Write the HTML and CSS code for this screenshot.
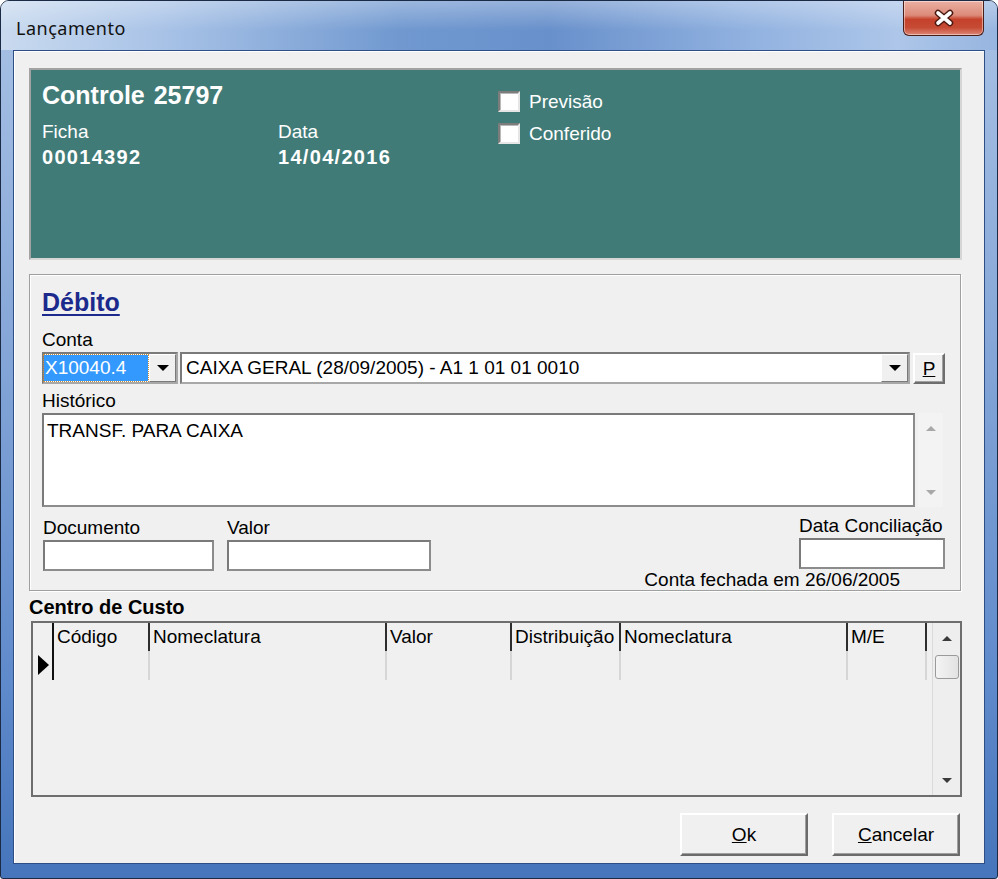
FILE: index.html
```html
<!DOCTYPE html>
<html lang="pt">
<head>
<meta charset="utf-8">
<title>Lançamento</title>
<link rel="stylesheet" href="styles.css">
</head>
<body>
<div class="window">
  <div class="titlebar">
    <span class="title">Lançamento</span>
    <div class="close-btn">
      <svg width="22" height="18" viewBox="0 0 22 18">
        <path d="M5 4 L17 14 M17 4 L5 14" stroke="#4a1810" stroke-width="6.5" stroke-linecap="round"/>
        <path d="M5 4 L17 14 M17 4 L5 14" stroke="#ffffff" stroke-width="3.6" stroke-linecap="round"/>
      </svg>
    </div>
  </div>
  <div class="client">
    <section class="info-panel">
      <div class="info-main">
        <div class="controle">Controle 25797</div>
        <div class="info-fields">
          <div class="info-field ficha"><div class="lbl">Ficha</div><div class="val">00014392</div></div>
          <div class="info-field"><div class="lbl">Data</div><div class="val">14/04/2016</div></div>
        </div>
      </div>
      <div class="checks">
        <div class="check"><span class="chk"></span><span>Previsão</span></div>
        <div class="check"><span class="chk"></span><span>Conferido</span></div>
      </div>
    </section>

    <section class="group">
      <div class="group-title">Débito</div>
      <div class="lbl lbl-conta">Conta</div>
      <div class="combo-row">
        <div class="combo combo-code"><span class="sel">X10040.4</span><span class="dd"></span></div>
        <div class="combo combo-name"><span class="combo-text">CAIXA GERAL (28/09/2005) - A1 1 01 01 0010</span><span class="dd"></span></div>
        <button class="btn-p"><u>P</u></button>
      </div>
      <div class="lbl lbl-hist">Histórico</div>
      <div class="hist-row">
        <div class="textarea">TRANSF. PARA CAIXA</div>
        <div class="vscroll-plain"><span class="arr up dim"></span><span class="arr down dim"></span></div>
      </div>
      <div class="doc-row">
        <div class="field f-doc"><div class="lbl">Documento</div><div class="input"></div></div>
        <div class="field f-valor"><div class="lbl">Valor</div><div class="input"></div></div>
        <div class="field f-conc"><div class="lbl">Data Conciliação</div><div class="input"></div></div>
      </div>
      <div class="fechada">Conta fechada em 26/06/2005</div>
    </section>

    <div class="cc-title">Centro de Custo</div>
    <div class="grid">
      <div class="grid-body">
        <div class="grid-row head">
          <div class="gc ind"></div>
          <div class="gc c1">Código</div>
          <div class="gc c2">Nomeclatura</div>
          <div class="gc c3">Valor</div>
          <div class="gc c4">Distribuição</div>
          <div class="gc c5">Nomeclatura</div>
          <div class="gc c6">M/E</div>
        </div>
        <div class="grid-row data">
          <div class="gc ind"><span class="pointer"></span></div>
          <div class="gc c1"></div>
          <div class="gc c2"></div>
          <div class="gc c3"></div>
          <div class="gc c4"></div>
          <div class="gc c5"></div>
          <div class="gc c6"></div>
        </div>
      </div>
      <div class="grid-scroll">
        <span class="arr up"></span>
        <span class="thumb"></span>
        <span class="arr down"></span>
      </div>
    </div>

    <div class="buttons">
      <button class="btn"><u>O</u>k</button>
      <button class="btn"><u>C</u>ancelar</button>
    </div>
  </div>
</div>
</body>
</html>
```

FILE: styles.css
```css
* { box-sizing: border-box; }
html, body { margin: 0; padding: 0; }
body {
  width: 998px;
  height: 879px;
  overflow: hidden;
  background: #ffffff;
  font-family: "Liberation Sans", Arial, sans-serif;
  font-size: 19px;
  color: #000;
}

.window {
  width: 998px;
  height: 879px;
  display: flex;
  flex-direction: column;
  border: 1px solid #1c2b45;
  border-radius: 9px 9px 3px 3px;
  overflow: hidden;
  padding: 0 12px 14px;
  background: linear-gradient(to bottom, #a9c2e5 0, #8aaad9 300px, #5f8acb 680px, #4675bb 100%);
}

.titlebar {
  height: 49px;
  flex: none;
  margin: 0 -12px;
  padding: 0 13px 0 15px;
  display: flex;
  justify-content: space-between;
  align-items: flex-start;
  background:
    linear-gradient(to bottom, rgba(255,255,255,0.3), rgba(255,255,255,0) 60%),
    linear-gradient(to right, #c9daef 0%, #a9c3e7 16%, #7199d0 40%, #6890cb 55%, #8fb0df 74%, #adc6e9 90%, #97b5e0 100%);
}
.title {
  margin-top: 16px;
  font-family: "Noto Sans", "Open Sans", sans-serif;
  font-size: 18px;
  line-height: 22px;
  letter-spacing: 0.5px;
  color: #111;
}
.close-btn {
  width: 81px;
  height: 35px;
  border: 1px solid #4a1d16;
  border-top: none;
  border-radius: 0 0 6px 6px;
  background: linear-gradient(to bottom, #eab0a3 0%, #dc8a78 42%, #c5412b 54%, #c64b34 78%, #dc8676 100%);
  box-shadow: inset 0 0 0 1px rgba(255,255,255,0.45);
  display: flex;
  align-items: center;
  justify-content: center;
}

.client {
  flex: 1;
  display: flex;
  flex-direction: column;
  background: #f0f0f0;
  border: 1px solid #2d4f86;
  box-shadow: inset 1px 1px 0 #ffffff;
  padding: 17px 22px 0 15px;
}

/* Teal info panel */
.info-panel {
  height: 192px;
  flex: none;
  display: flex;
  padding: 11px;
  background: #417b78;
  border: 2px solid;
  border-color: #a3a3a3 #d6d6d6 #d6d6d6 #a3a3a3;
  color: #ffffff;
}
.info-main { width: 456px; }
.controle {
  font-size: 25px;
  font-weight: bold;
  line-height: 28px;
  word-spacing: 2px;
}
.info-fields { display: flex; margin-top: 12px; }
.ficha { width: 236px; }
.lbl { line-height: 22px; }
.val {
  margin-top: 3px;
  font-size: 20px;
  font-weight: bold;
  line-height: 22px;
  letter-spacing: 1.3px;
}
.checks { margin-top: 10px; }
.check {
  display: flex;
  align-items: center;
  height: 21px;
  margin-bottom: 11px;
}
.chk {
  width: 22px;
  height: 21px;
  margin-right: 9px;
  background: #ffffff;
  border: 2px solid;
  border-color: #7c7c7c #e6e6e6 #e6e6e6 #7c7c7c;
  box-shadow: inset 1px 1px 0 #b9b9b9;
}

/* Débito group */
.group {
  height: 317px;
  flex: none;
  width: 932px;
  margin-top: 14px;
  padding: 13px 15px 0 12px;
  border: 1px solid #a0a0a0;
  box-shadow: inset 1px 1px 0 #ffffff, 1px 1px 0 #ffffff;
}
.group-title {
  font-size: 25px;
  font-weight: bold;
  line-height: 28px;
  color: #1b2a8c;
  text-decoration: underline;
  text-decoration-thickness: 2px;
  text-underline-offset: 3px;
}
.lbl-conta { margin-top: 13px; }
.combo-row {
  display: flex;
  height: 32px;
  margin-top: 1px;
}
.combo {
  height: 32px;
  display: flex;
  align-items: center;
  background: #ffffff;
  border: 2px solid;
  border-color: #7a7a7a #a8a8a8 #a8a8a8 #7a7a7a;
}
.combo-code { width: 136px; }
.combo-name { width: 730px; margin-left: 2px; }
.sel {
  width: 104px;
  height: 26px;
  line-height: 26px;
  padding-left: 1px;
  background: #3399ff;
  color: #ffffff;
  outline: 1px dotted #c98a3a;
}
.combo-text { padding-left: 4px; white-space: nowrap; }
.dd {
  width: 27px;
  height: 28px;
  margin-left: auto;
  display: flex;
  align-items: center;
  justify-content: center;
  background: #f0f0f0;
  border: 1px solid;
  border-color: #ffffff #7a7a7a #7a7a7a #ffffff;
}
.dd::after {
  content: "";
  border-left: 6px solid transparent;
  border-right: 6px solid transparent;
  border-top: 6px solid #000;
}
.btn-p {
  width: 32px;
  height: 31px;
  margin: 1px 0 0 3px;
  padding: 0;
  font: inherit;
  color: #000;
  background: #f0f0f0;
  border: 2px solid;
  border-color: #ffffff #6e6e6e #6e6e6e #ffffff;
  box-shadow: inset -1px -1px 0 #a0a0a0;
}
.lbl-hist { margin-top: 6px; }
.hist-row {
  display: flex;
  height: 94px;
  margin-top: 1px;
}
.textarea {
  width: 873px;
  height: 94px;
  padding: 5px 3px;
  line-height: 22px;
  background: #ffffff;
  border: 2px solid;
  border-color: #7a7a7a #8c8c8c #8c8c8c #7a7a7a;
}
.vscroll-plain {
  position: relative;
  width: 25px;
  margin-left: 3px;
  background: #f3f3f3;
}
.arr {
  position: absolute;
  left: 50%;
  margin-left: -5px;
  width: 0;
  height: 0;
  border-left: 5px solid transparent;
  border-right: 5px solid transparent;
}
.arr.up { top: 13px; border-bottom: 5px solid #3a3a3a; }
.arr.down { bottom: 12px; border-top: 5px solid #3a3a3a; }
.arr.up.dim { border-bottom-color: #a8a8a8; }
.arr.down.dim { border-top-color: #a8a8a8; }

.doc-row {
  display: flex;
  margin-top: 10px;
}
.input {
  height: 31px;
  margin-top: 1px;
  background: #ffffff;
  border: 2px solid;
  border-color: #7a7a7a #8c8c8c #8c8c8c #7a7a7a;
}
.f-doc { width: 171px; margin-left: 1px; }
.f-valor { width: 204px; margin-left: 13px; }
.f-conc { width: 146px; margin-left: auto; margin-top: -2px; }
.fechada {
  margin-top: -1px;
  padding-right: 45px;
  text-align: right;
  line-height: 20px;
}

/* Centro de Custo */
.cc-title {
  margin-top: 5px;
  font-size: 20px;
  font-weight: bold;
  line-height: 22px;
}
.grid {
  width: 931px;
  height: 176px;
  flex: none;
  margin: 3px 0 0 2px;
  display: flex;
  border: 2px solid #6e6e6e;
  background: #f0f0f0;
}
.grid-body { flex: 1; }
.grid-row { display: flex; }
.grid-row.head { height: 28px; }
.grid-row.data { height: 29px; }
.gc {
  flex: none;
  padding-left: 3px;
  line-height: 28px;
  white-space: nowrap;
  border-right: 2px solid #2e2e2e;
}
.grid-row.data .gc { border-right-color: #d6d6d6; }
.grid-row .gc.ind { width: 21px; border-right-color: #111; padding: 0; position: relative; }
.c1 { width: 96px; }
.c2 { width: 237px; }
.c3 { width: 125px; }
.c4 { width: 109px; }
.c5 { width: 227px; }
.c6 { width: 79px; }
.pointer {
  position: absolute;
  left: 5px;
  top: 4px;
  width: 0;
  height: 0;
  border-top: 10px solid transparent;
  border-bottom: 10px solid transparent;
  border-left: 11px solid #000;
}
.grid-scroll {
  position: relative;
  width: 28px;
  border-left: 1px solid #dadada;
  background: #eeeeee;
}
.thumb {
  position: absolute;
  left: 2px;
  top: 32px;
  width: 24px;
  height: 24px;
  border: 1px solid #9a9a9a;
  border-radius: 3px;
  background: linear-gradient(to right, #f4f4f4, #e2e2e2);
}

/* Bottom buttons */
.buttons {
  display: flex;
  justify-content: flex-end;
  gap: 24px;
  margin-top: 16px;
  padding-right: 2px;
}
.btn {
  width: 128px;
  height: 43px;
  padding: 0;
  font: inherit;
  color: #000;
  background: #f0f0f0;
  border: 2px solid;
  border-color: #ffffff #6b6b6b #6b6b6b #ffffff;
  box-shadow: inset -1px -1px 0 #a0a0a0;
}
```
